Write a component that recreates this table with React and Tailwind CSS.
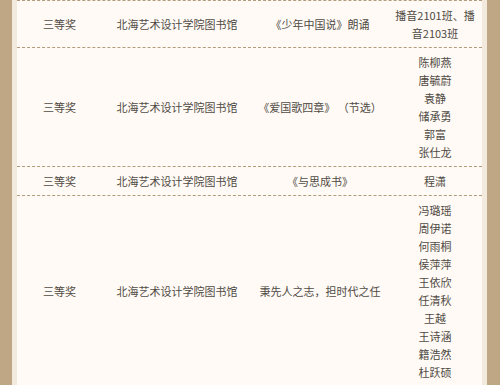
const ROWS = [
  {
    prize: '三等奖',
    unit: '北海艺术设计学院图书馆',
    work: '《少年中国说》朗诵',
    people: ['播音2101班、播音2103班'],
  },
  {
    prize: '三等奖',
    unit: '北海艺术设计学院图书馆',
    work: '《爱国歌四章》 （节选）',
    people: ['陈柳燕', '唐毓蔚', '袁静', '储承勇', '郭富', '张仕龙'],
  },
  {
    prize: '三等奖',
    unit: '北海艺术设计学院图书馆',
    work: '《与思成书》',
    people: ['程潇'],
  },
  {
    prize: '三等奖',
    unit: '北海艺术设计学院图书馆',
    work: '秉先人之志，担时代之任',
    people: ['冯璐瑶', '周伊诺', '何雨桐', '侯萍萍', '王依欣', '任清秋', '王越', '王诗涵', '籍浩然', '杜跃硕'],
  },
]

const cell = 'flex items-center justify-center text-center px-[5px] py-[5px]'

export default function App() {
  return (
    <div
      className="flex h-[385px] w-[500px] overflow-hidden text-[11px] leading-[18px] text-[#4f4a44]"
      style={{ fontFamily: '"Noto Sans CJK SC", "Noto Sans", sans-serif' }}
    >
      <div className="w-[12px] shrink-0 bg-[#bfa785]" />
      <div className="w-[5px] shrink-0 bg-[#f2eadd]" />

      <main className="flex-1 bg-[#fffaf5]">
        <div className="border-t border-dashed border-[#b29c7b]">
          {ROWS.map((r, i) => (
            <div key={i} className="flex border-b border-dashed border-[#b29c7b]">
              <div className={`${cell} w-[85px]`}>{r.prize}</div>
              <div className={`${cell} w-[150px]`}>{r.unit}</div>
              <div className={`${cell} w-[136px] whitespace-pre`}>{r.work}</div>
              <div className={`${cell} w-[94px] flex-col`}>
                {r.people.map(p => (
                  <span key={p}>{p}</span>
                ))}
              </div>
            </div>
          ))}
        </div>
      </main>

      <div className="w-[5px] shrink-0 bg-[#f2eadd]" />
      <div className="w-[13px] shrink-0 bg-[#bfa785]" />
    </div>
  )
}
